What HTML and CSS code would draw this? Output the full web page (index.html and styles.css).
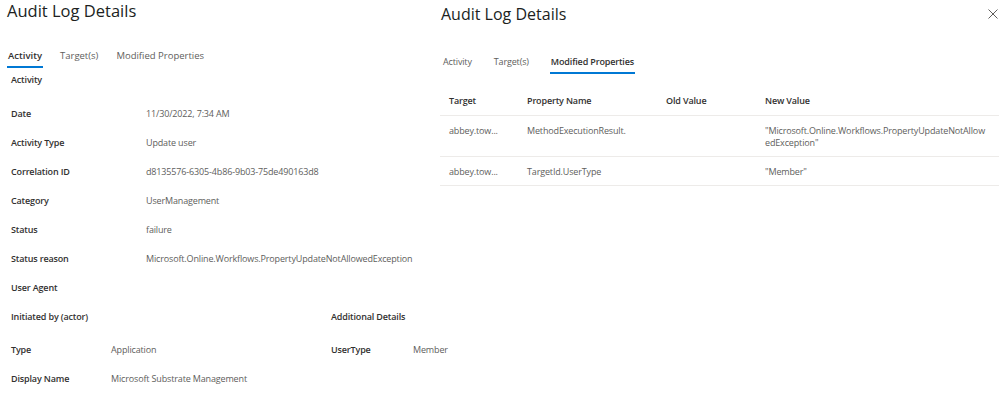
FILE: index.html
```html
<!DOCTYPE html>
<html lang="en">
<head>
  <meta charset="UTF-8" />
  <meta name="viewport" content="width=device-width, initial-scale=1.0" />
  <title>Audit Log Details</title>
  <link rel="stylesheet" href="styles.css">
</head>
<body>

  <div class="page">

    <!-- activity tab -->
    <section class="panel panel-left">
      <h1 class="title">Audit Log Details</h1>

      <div class="tabs tabs-large">
        <button class="tab active bold">Activity</button>
        <button class="tab">Target(s)</button>
        <button class="tab">Modified Properties</button>
      </div>

      <h2 class="section-title">Activity</h2>

      <div class="props">
        <div class="prop"><span class="prop-label">Date</span><span class="prop-value">11/30/2022, 7:34 AM</span></div>
        <div class="prop"><span class="prop-label">Activity Type</span><span class="prop-value">Update user</span></div>
        <div class="prop"><span class="prop-label">Correlation ID</span><span class="prop-value">d8135576-6305-4b86-9b03-75de490163d8</span></div>
        <div class="prop"><span class="prop-label">Category</span><span class="prop-value">UserManagement</span></div>
        <div class="prop"><span class="prop-label">Status</span><span class="prop-value">failure</span></div>
        <div class="prop"><span class="prop-label">Status reason</span><span class="prop-value">Microsoft.Online.Workflows.PropertyUpdateNotAllowedException</span></div>
        <div class="prop"><span class="prop-label">User Agent</span><span class="prop-value"></span></div>
      </div>

      <div class="columns">
        <div class="column column-actor">
          <h2 class="section-title section-row">Initiated by (actor)</h2>
          <div class="props props-small">
            <div class="prop"><span class="prop-label">Type</span><span class="prop-value">Application</span></div>
            <div class="prop"><span class="prop-label">Display Name</span><span class="prop-value">Microsoft Substrate Management</span></div>
          </div>
        </div>
        <div class="column column-extra">
          <h2 class="section-title section-row">Additional Details</h2>
          <div class="props props-extra">
            <div class="prop"><span class="prop-label">UserType</span><span class="prop-value">Member</span></div>
          </div>
        </div>
      </div>
    </section>

    <!-- modified properties tab -->
    <section class="panel panel-right">
      <div class="panel-head">
        <h1 class="title title-small">Audit Log Details</h1>
        <button class="close-btn" aria-label="Close">
          <svg width="10" height="10" viewBox="0 0 10 10">
            <path d="M0.5 0.5 L9.5 9.5 M9.5 0.5 L0.5 9.5" stroke="#605e5c" stroke-width="1" fill="none"/>
          </svg>
        </button>
      </div>

      <div class="tabs tabs-small">
        <button class="tab">Activity</button>
        <button class="tab">Target(s)</button>
        <button class="tab active bold">Modified Properties</button>
      </div>

      <table class="mod-table">
        <thead>
          <tr>
            <th class="col-target">Target</th>
            <th class="col-name">Property Name</th>
            <th class="col-old">Old Value</th>
            <th class="col-new">New Value</th>
          </tr>
        </thead>
        <tbody>
          <tr>
            <td>abbey.tow...</td>
            <td>MethodExecutionResult.</td>
            <td></td>
            <td><span class="wrap-value">"Microsoft.Online.Workflows.PropertyUpdateNotAllowedException"</span></td>
          </tr>
          <tr>
            <td>abbey.tow...</td>
            <td>TargetId.UserType</td>
            <td></td>
            <td>"Member"</td>
          </tr>
        </tbody>
      </table>
    </section>

  </div>

</body>
</html>
```

FILE: styles.css
```css
html, body {
  margin: 0;
  padding: 0;
  background: #ffffff;
  font-family: "Open Sans", "Noto Sans", sans-serif;
  color: #323130;
  overflow: hidden;
}

.page {
  display: flex;
  width: 999px;
  height: 394px;
}

.panel {
  display: flex;
  flex-direction: column;
  font-size: 9px;
  letter-spacing: -0.15px;
}

.panel-left {
  width: 440px;
  flex-shrink: 0;
}

.panel-right {
  flex: 1;
  min-width: 0;
}

.title {
  margin: 0;
  font-size: 16.5px;
  font-weight: 400;
  line-height: 22px;
  letter-spacing: 0;
  color: #201f1e;
  padding-left: 7px;
}

.title-small {
  font-size: 16px;
  padding-left: 1px;
}

.panel-head {
  display: flex;
  justify-content: space-between;
  align-items: center;
  margin-top: 3px;
}

.close-btn {
  border: none;
  background: none;
  padding: 0;
  width: 10px;
  height: 10px;
  margin-right: 1px;
  display: flex;
}

/* tabs */

.tabs {
  display: flex;
  gap: 16px;
  margin-top: 26px;
  padding-left: 7px;
}

.tabs-large {
  font-size: 9.5px;
  letter-spacing: 0;
}

.tabs-small {
  margin-top: 29px;
  gap: 20px;
  padding-left: 2px;
}

.tab {
  border: none;
  background: none;
  font-family: inherit;
  font-size: inherit;
  letter-spacing: inherit;
  color: #605e5c;
  padding: 0 1px 2px;
  line-height: 16px;
  border-bottom: 2px solid transparent;
  cursor: pointer;
}

.tab.active {
  color: #323130;
  border-bottom-color: #0078d4;
}

.tab.bold {
  font-weight: 600;
}

/* property rows */

.section-title {
  margin: 4px 0 0;
  padding-left: 11px;
  font-size: inherit;
  font-weight: 600;
  line-height: 16px;
}

.props {
  margin-top: 11px;
  padding-left: 11px;
}

.prop {
  display: flex;
  height: 29px;
  align-items: center;
  white-space: nowrap;
}

.prop-label {
  width: 135px;
  flex-shrink: 0;
  font-weight: 600;
  color: #323130;
}

.prop-value {
  color: #605e5c;
}

.columns {
  display: flex;
}

.column-actor {
  width: 331px;
  flex-shrink: 0;
}

.section-row {
  margin: 0;
  height: 29px;
  display: flex;
  align-items: center;
}

.props-small,
.props-extra {
  margin-top: 4px;
}

.props-small .prop-label {
  width: 100px;
}

.column-extra .section-title,
.column-extra .props {
  padding-left: 0;
}

.props-extra .prop-label {
  width: 82px;
}

/* modified properties table */

.mod-table {
  margin-top: 11px;
  border-collapse: collapse;
  width: 100%;
  table-layout: fixed;
}

.mod-table th {
  text-align: left;
  font-weight: 600;
  color: #323130;
  height: 30px;
  padding: 0 0 0 9px;
  border-bottom: 1px solid #edebe9;
}

.mod-table td {
  vertical-align: top;
  color: #605e5c;
  line-height: 12px;
  padding: 9px 0 7px 9px;
  border-bottom: 1px solid #edebe9;
}

.col-target { width: 69px; }
.col-name { width: 130px; }
.col-old { width: 90px; }

.wrap-value {
  display: block;
  width: 223px;
  word-break: break-all;
}
```
